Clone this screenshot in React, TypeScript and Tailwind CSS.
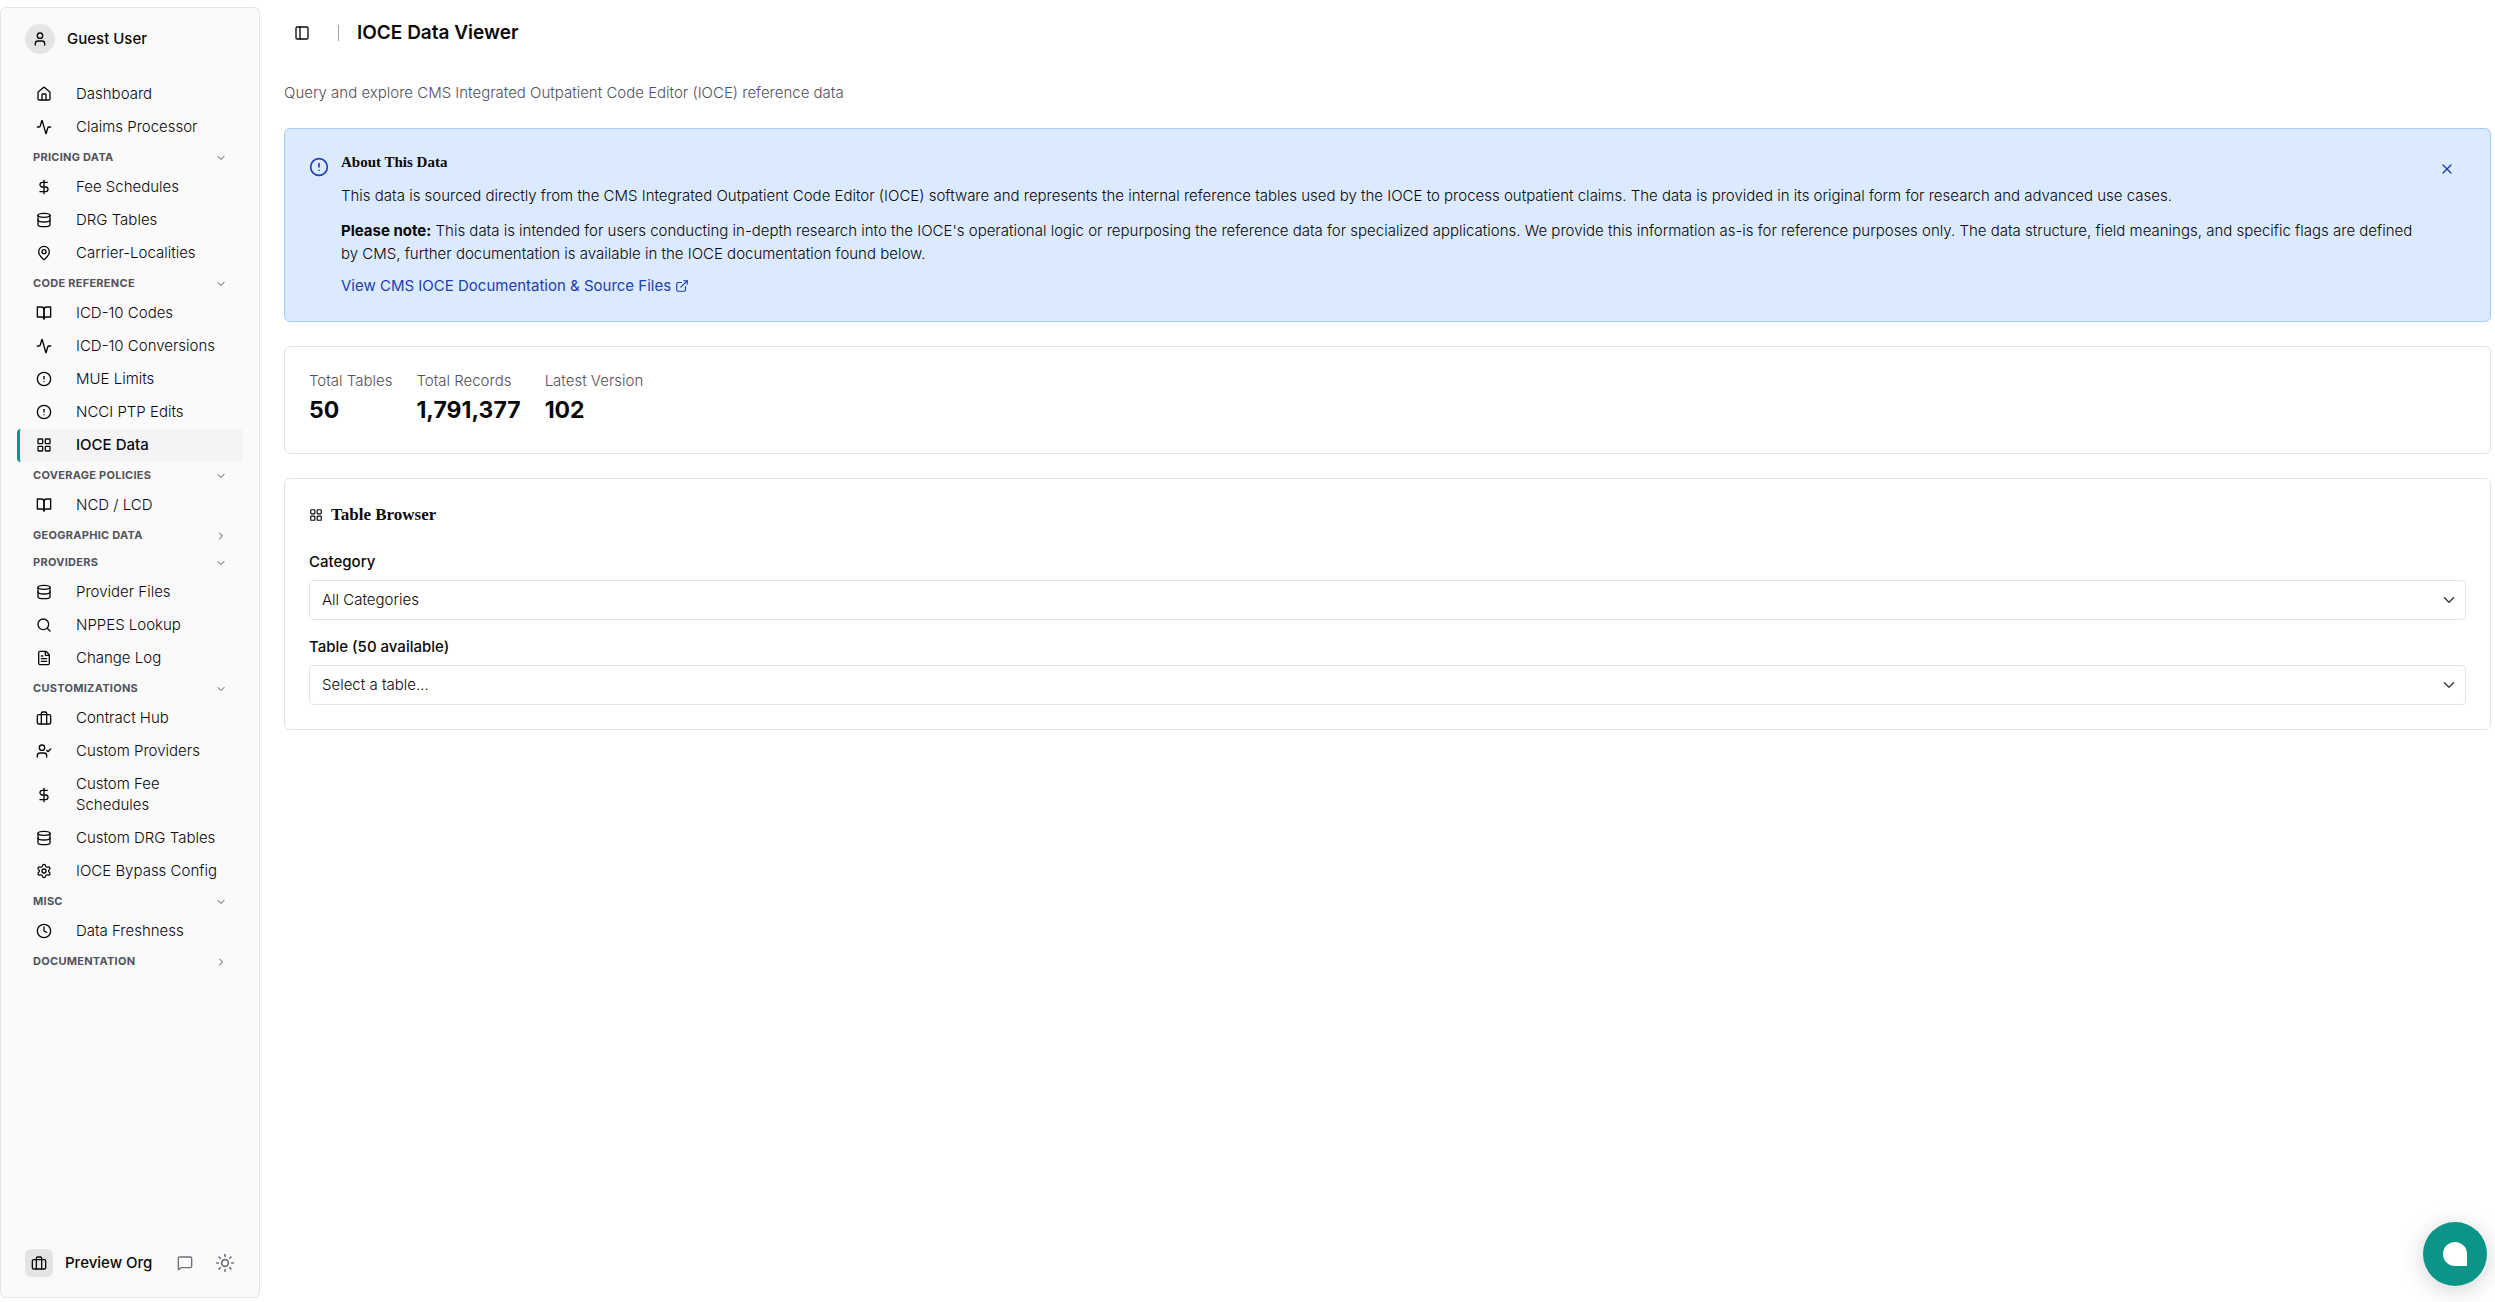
import { useState } from 'react';
import {
  Activity,
  ChevronDown,
  ChevronRight,
  CircleAlert,
  Clock,
  Database,
  DollarSign,
  ExternalLink,
  FileText,
  House,
  LayoutGrid,
  MapPin,
  MessageSquare,
  PanelLeft,
  Search,
  Settings,
  Sun,
  User,
  X,
  type LucideIcon,
} from 'lucide-react';
import { FiBriefcase, FiBookOpen } from 'react-icons/fi';
import { LuUserCheck } from 'react-icons/lu';
import type { IconType } from 'react-icons';

type NavItem = { label: string; icon: LucideIcon | IconType; active?: boolean };
type NavGroup = { title?: string; collapsed?: boolean; items: NavItem[] };

const groups: NavGroup[] = [
  {
    items: [
      { label: 'Dashboard', icon: House },
      { label: 'Claims Processor', icon: Activity },
    ],
  },
  {
    title: 'Pricing Data',
    items: [
      { label: 'Fee Schedules', icon: DollarSign },
      { label: 'DRG Tables', icon: Database },
      { label: 'Carrier-Localities', icon: MapPin },
    ],
  },
  {
    title: 'Code Reference',
    items: [
      { label: 'ICD-10 Codes', icon: FiBookOpen },
      { label: 'ICD-10 Conversions', icon: Activity },
      { label: 'MUE Limits', icon: CircleAlert },
      { label: 'NCCI PTP Edits', icon: CircleAlert },
      { label: 'IOCE Data', icon: LayoutGrid, active: true },
    ],
  },
  { title: 'Coverage Policies', items: [{ label: 'NCD / LCD', icon: FiBookOpen }] },
  { title: 'Geographic Data', collapsed: true, items: [] },
  {
    title: 'Providers',
    items: [
      { label: 'Provider Files', icon: Database },
      { label: 'NPPES Lookup', icon: Search },
      { label: 'Change Log', icon: FileText },
    ],
  },
  {
    title: 'Customizations',
    items: [
      { label: 'Contract Hub', icon: FiBriefcase },
      { label: 'Custom Providers', icon: LuUserCheck },
      { label: 'Custom Fee Schedules', icon: DollarSign },
      { label: 'Custom DRG Tables', icon: Database },
      { label: 'IOCE Bypass Config', icon: Settings },
    ],
  },
  { title: 'Misc', items: [{ label: 'Data Freshness', icon: Clock }] },
  { title: 'Documentation', collapsed: true, items: [] },
];

const stats = [
  { label: 'Total Tables', value: '50' },
  { label: 'Total Records', value: '1,791,377' },
  { label: 'Latest Version', value: '102' },
];

function Sidebar() {
  return (
    <aside className="flex w-[260px] shrink-0 flex-col rounded-md border border-[#e4e4e7] bg-[#fafafa] px-4 pt-4 pb-5">
      <div className="flex items-center gap-3 px-2">
        <span className="flex size-[30px] items-center justify-center rounded-full bg-[#e4e4e7]">
          <User size={16} />
        </span>
        <span className="font-medium">Guest User</span>
      </div>

      <nav className="mt-6 flex-1">
        {groups.map((group, i) => (
          <div key={i}>
            {group.title && (
              <button
                type="button"
                className="flex h-[27px] w-full items-center justify-between px-4 text-[11px] font-bold tracking-wide text-[#52525b] uppercase"
              >
                {group.title}
                {group.collapsed ? <ChevronRight size={12} /> : <ChevronDown size={12} />}
              </button>
            )}
            {group.items.map((item) => (
              <a
                key={item.label}
                href="#"
                className={
                  item.active
                    ? 'flex items-center gap-6 rounded-sm border-l-3 border-[#0d9488] bg-[#f4f4f5] pt-[5px] pr-3 pb-[7px] pl-4 font-medium'
                    : 'flex items-center gap-6 border-l-3 border-transparent pt-[5px] pr-3 pb-[7px] pl-4'
                }
              >
                <item.icon size={16} className="mt-px shrink-0" />
                <span className="leading-[21px]">{item.label}</span>
              </a>
            ))}
          </div>
        ))}
      </nav>

      <div className="flex items-center px-2">
        <span className="flex size-7 items-center justify-center rounded-md bg-[#e4e4e7]">
          <FiBriefcase size={16} />
        </span>
        <span className="ml-3 flex-1 font-medium">Preview Org</span>
        <div className="flex items-center gap-[22px] text-[#71717a]">
          <button type="button" aria-label="Feedback">
            <MessageSquare size={16} />
          </button>
          <button type="button" aria-label="Toggle theme">
            <Sun size={20} />
          </button>
        </div>
      </div>
    </aside>
  );
}

function AboutBanner({ onClose }: { onClose: () => void }) {
  return (
    <section className="flex items-start rounded-md border border-[#9fcfff] bg-[#dbeafe] p-6">
      <CircleAlert size={20} className="mt-1 shrink-0 text-[#1e40af]" />
      <div className="ml-3 flex-1 leading-[23px]">
        <h2 className="font-['Liberation_Serif',serif] text-[15px] leading-[19px] font-bold">About This Data</h2>
        <p className="mt-3">
          This data is sourced directly from the CMS Integrated Outpatient Code Editor (IOCE) software and represents
          the internal reference tables used by the IOCE to process outpatient claims. The data is provided in its
          original form for research and advanced use cases.
        </p>
        <p className="mt-3">
          <strong className="font-bold">Please note:</strong> This data is intended for users conducting in-depth
          research into the IOCE's operational logic or repurposing the reference data for specialized applications. We
          provide this information as-is for reference purposes only. The data structure, field meanings, and specific
          flags are defined by CMS, further documentation is available in the IOCE documentation found below.
        </p>
        <a href="#" className="mt-[10px] flex w-fit items-center gap-1 leading-[22px] font-normal text-[#1e40af]">
          View CMS IOCE Documentation &amp; Source Files
          <ExternalLink size={14} />
        </a>
      </div>
      <button
        type="button"
        aria-label="Dismiss"
        onClick={onClose}
        className="ml-2 flex h-8 w-[38px] shrink-0 items-center justify-center text-[#1e40af]"
      >
        <X size={16} />
      </button>
    </section>
  );
}

function SelectField({ id, label, option }: { id: string; label: string; option: string }) {
  return (
    <div>
      <label htmlFor={id} className="block leading-[21px] font-medium">
        {label}
      </label>
      <div className="relative mt-2">
        <select id={id} className="h-10 w-full appearance-none rounded-sm border border-[#e4e4e7] bg-white px-3">
          <option>{option}</option>
        </select>
        <ChevronDown size={18} className="pointer-events-none absolute top-[11px] right-2 text-[#3f3f46]" />
      </div>
    </div>
  );
}

export default function App() {
  const [showAbout, setShowAbout] = useState(true);

  return (
    <div className="flex min-h-screen bg-white pt-[7px] pb-1 font-[Inter,sans-serif] text-[15px] font-light text-[#09090b]">
      <Sidebar />

      <main className="min-w-0 flex-1 pr-1 pl-6">
        <header className="flex h-[52px] items-center">
          <button type="button" aria-label="Toggle sidebar" className="flex size-9 items-center justify-center">
            <PanelLeft size={16} />
          </button>
          <span className="ml-[18px] h-4 w-px bg-[#a1a1aa]" />
          <h1 className="ml-[18px] text-[19px] font-semibold">IOCE Data Viewer</h1>
        </header>

        <p className="mt-[23px] leading-[22px] text-[#52525b]">
          Query and explore CMS Integrated Outpatient Code Editor (IOCE) reference data
        </p>

        <div className="mt-6 flex flex-col gap-6">
          {showAbout && <AboutBanner onClose={() => setShowAbout(false)} />}

          <section className="flex gap-6 rounded-md border border-[#e4e4e7] px-6 pt-6 pb-7">
            {stats.map((stat) => (
              <div key={stat.label}>
                <p className="leading-[20px] text-[#52525b]">{stat.label}</p>
                <p className="mt-1 text-[23px] leading-[30px] font-bold">{stat.value}</p>
              </div>
            ))}
          </section>

          <section className="rounded-md border border-[#e4e4e7] p-6">
            <h2 className="flex items-center gap-2 font-['Liberation_Serif',serif] text-[17px] leading-[24px] font-bold">
              <LayoutGrid size={14} />
              Table Browser
            </h2>
            <div className="mt-6 flex flex-col gap-4">
              <SelectField id="category" label="Category" option="All Categories" />
              <SelectField id="table" label="Table (50 available)" option="Select a table..." />
            </div>
          </section>
        </div>
      </main>

      <button
        type="button"
        aria-label="Open chat"
        className="fixed right-2 bottom-4 flex size-16 items-center justify-center rounded-full bg-[#0d9488] shadow-[0_4px_24px_rgba(0,0,0,0.18)]"
      >
        <span className="size-6 rounded-full rounded-br-none bg-white" />
      </button>
    </div>
  );
}
